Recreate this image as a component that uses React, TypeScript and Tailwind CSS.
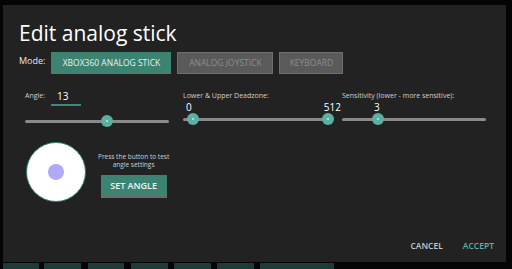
import React from 'react';

const font = { fontFamily: '"Open Sans", "Noto Sans", sans-serif' };

interface SliderProps {
  width: number;
  thumbs: number[];
}

const Slider: React.FC<SliderProps> = ({ width, thumbs }) => (
  <div className="relative h-[12px]" style={{ width }}>
    <div className="absolute left-0 right-0 top-[5px] h-[3px] rounded-full bg-[#8a8a8a]" />
    {thumbs.map((x, i) => (
      <div
        key={i}
        className="absolute top-0 flex h-[12px] w-[12px] items-center justify-center rounded-full bg-[#5bb0a2]"
        style={{ left: x - 6 }}
      >
        <div className="h-[2px] w-[2px] rounded-full bg-[#cfe9e4]" />
      </div>
    ))}
  </div>
);

export default function App() {
  return (
    <div className="flex h-[269px] w-[512px] flex-col overflow-hidden bg-[#050505] pl-[3px] pt-[5px]" style={font}>
      <div className="flex h-[257px] w-[503px] flex-col bg-[#222222] pl-[16px] pr-[18px]">
        <h1 className="mt-[13px] text-[21px] leading-[30px] text-white">Edit analog stick</h1>

        <div className="mt-[4px] flex items-center">
          <span className="mr-[6px] -mt-[4px] text-[9px] text-[#e6e6e6]">Mode:</span>
          <div className="flex h-[22px] w-[120px] items-center justify-center bg-[#3c8372] text-[8.5px] text-[#e8f2ef]">
            XBOX360 ANALOG STICK
          </div>
          <div className="ml-[6px] flex h-[22px] w-[96px] items-center justify-center border border-[#6e6e6e] bg-[#5a5a5a] text-[8.5px] text-[#8d8d8d]">
            ANALOG JOYSTICK
          </div>
          <div className="ml-[6px] flex h-[22px] w-[64px] items-center justify-center border border-[#6e6e6e] bg-[#5a5a5a] text-[8.5px] text-[#8d8d8d]">
            KEYBOARD
          </div>
        </div>

        <div className="mt-[16px] flex pl-[6px]">
          <div className="flex w-[158px] flex-col">
            <div className="flex items-start">
              <span className="mt-[1px] text-[7px] text-[#cfcfcf]">Angle:</span>
              <div className="ml-[6px] w-[30px] border-b-2 border-[#3c8b7b] pb-[1px] pl-[6px] text-[10px] leading-[13px] text-white">13</div>
            </div>
            <div className="mt-[9px]">
              <Slider width={144} thumbs={[82]} />
            </div>
          </div>

          <div className="flex w-[159px] flex-col">
            <span className="mt-[1px] text-[7px] text-[#cfcfcf]">Lower &amp; Upper Deadzone:</span>
            <div className="-mt-[1px] flex justify-between pl-[3px] pr-[1px] text-[10px] leading-[13px] text-white">
              <span>0</span>
              <span>512</span>
            </div>
            <div className="-mt-[1px]">
              <Slider width={147} thumbs={[10, 145]} />
            </div>
          </div>

          <div className="flex flex-col">
            <span className="mt-[1px] text-[7px] text-[#cfcfcf]">Sensitivity (lower - more sensitive):</span>
            <div className="-mt-[1px] pl-[32px] text-[10px] leading-[13px] text-white">3</div>
            <div className="-mt-[1px]">
              <Slider width={144} thumbs={[36]} />
            </div>
          </div>
        </div>

        <div className="mt-[15px] flex items-start pl-[7px]">
          <div className="flex h-[60px] w-[60px] items-center justify-center rounded-full border border-[#2f7f75] bg-white">
            <div className="h-[16px] w-[16px] rounded-full bg-[#b1a9f5]" />
          </div>
          <div className="ml-[12px] mt-[11px] flex flex-col items-center">
            <p className="text-center text-[6.5px] leading-[8px] text-[#cfcfcf]">
              Press the button to test
              <br />
              angle settings
            </p>
            <div className="mt-[6px] flex h-[23px] w-[66px] items-center justify-center border-b-2 border-[#6b6b6b] bg-[#3c8372] text-[9px] font-semibold text-[#eef5f3]">
              SET ANGLE
            </div>
          </div>
        </div>

        <div className="mt-auto mb-[9px] -mr-[6px] flex justify-end gap-[20px] text-[8.5px] font-semibold">
          <span className="text-[#c8c8c8]">CANCEL</span>
          <span className="text-[#5bb2a3]">ACCEPT</span>
        </div>
      </div>

      <div className="mt-[1px] flex h-[6px]">
        <div className="w-[36px] bg-[#1f3b37]" />
        <div className="ml-[5px] w-[37px] bg-[#1f3b37]" />
        <div className="ml-[7px] w-[36px] bg-[#1f3b37]" />
        <div className="ml-[7px] w-[37px] bg-[#1f3b37]" />
        <div className="ml-[6px] w-[37px] bg-[#1f3b37]" />
        <div className="ml-[6px] w-[37px] bg-[#1f3b37]" />
        <div className="ml-[6px] w-[74px] bg-[#1f3b37]" />
      </div>
    </div>
  );
}
